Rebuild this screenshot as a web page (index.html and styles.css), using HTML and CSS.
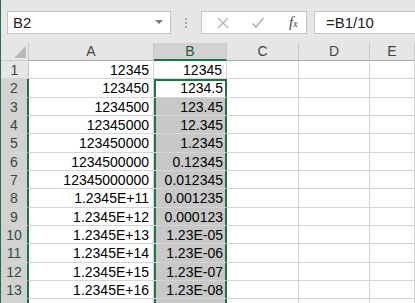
FILE: index.html
```html
<!DOCTYPE html>
<html lang="ja">
<head>
  <meta charset="UTF-8">
  <title>Sheet</title>
  <link rel="stylesheet" href="styles.css">
</head>
<body>
  <div class="window">
    <div class="toolbar">
      <div class="namebox">
        <span>B2</span>
        <svg class="drop" width="8" height="5" viewBox="0 0 8 5"><path d="M0 0h8L4 4z" fill="#7a7a7a"/></svg>
      </div>
      <div class="grip"><i></i><i></i><i></i></div>
      <div class="fnbox">
        <svg width="14" height="14" viewBox="0 0 14 14"><path d="M2 2l10 10M12 2L2 12" stroke="#b4b4b4" stroke-width="1.4" fill="none"/></svg>
        <svg width="14" height="14" viewBox="0 0 14 14"><path d="M1.5 7.5l3.5 3.5 7.5-9" stroke="#b4b4b4" stroke-width="1.6" fill="none"/></svg>
        <span class="fx">f<sub>x</sub></span>
      </div>
      <div class="formula">=B1/10</div>
    </div>

    <div class="sheet">
      <div class="corner"><svg width="12" height="12" viewBox="0 0 12 12"><path d="M12 0v12H0z" fill="#b9b9b9"/></svg></div>
      <div class="colhead">A</div>
      <div class="colhead on">B</div>
      <div class="colhead">C</div>
      <div class="colhead">D</div>
      <div class="colhead">E</div>

      <div class="rowhead">1</div><div class="cell">12345</div><div class="cell">12345</div><div class="cell"></div><div class="cell"></div><div class="cell"></div>
      <div class="rowhead on">2</div><div class="cell">123450</div><div class="cell sel top">1234.5</div><div class="cell"></div><div class="cell"></div><div class="cell"></div>
      <div class="rowhead on">3</div><div class="cell">1234500</div><div class="cell sel fill">123.45</div><div class="cell"></div><div class="cell"></div><div class="cell"></div>
      <div class="rowhead on">4</div><div class="cell">12345000</div><div class="cell sel fill">12.345</div><div class="cell"></div><div class="cell"></div><div class="cell"></div>
      <div class="rowhead on">5</div><div class="cell">123450000</div><div class="cell sel fill">1.2345</div><div class="cell"></div><div class="cell"></div><div class="cell"></div>
      <div class="rowhead on">6</div><div class="cell">1234500000</div><div class="cell sel fill">0.12345</div><div class="cell"></div><div class="cell"></div><div class="cell"></div>
      <div class="rowhead on">7</div><div class="cell">12345000000</div><div class="cell sel fill">0.012345</div><div class="cell"></div><div class="cell"></div><div class="cell"></div>
      <div class="rowhead on">8</div><div class="cell">1.2345E+11</div><div class="cell sel fill">0.001235</div><div class="cell"></div><div class="cell"></div><div class="cell"></div>
      <div class="rowhead on">9</div><div class="cell">1.2345E+12</div><div class="cell sel fill">0.000123</div><div class="cell"></div><div class="cell"></div><div class="cell"></div>
      <div class="rowhead on">10</div><div class="cell">1.2345E+13</div><div class="cell sel fill">1.23E-05</div><div class="cell"></div><div class="cell"></div><div class="cell"></div>
      <div class="rowhead on">11</div><div class="cell">1.2345E+14</div><div class="cell sel fill">1.23E-06</div><div class="cell"></div><div class="cell"></div><div class="cell"></div>
      <div class="rowhead on">12</div><div class="cell">1.2345E+15</div><div class="cell sel fill">1.23E-07</div><div class="cell"></div><div class="cell"></div><div class="cell"></div>
      <div class="rowhead on">13</div><div class="cell">1.2345E+16</div><div class="cell sel fill">1.23E-08</div><div class="cell"></div><div class="cell"></div><div class="cell"></div>
      <div class="rowhead on">14</div><div class="cell">1.2345E+17</div><div class="cell sel fill">1.23E-09</div><div class="cell"></div><div class="cell"></div><div class="cell"></div>
    </div>
  </div>
</body>
</html>
```

FILE: styles.css
```css
body {
  margin: 0;
  font-family: "Liberation Sans", Arial, sans-serif;
  overflow: hidden;
}
.window {
  width: 415px;
  height: 303px;
  border-left: 1px solid #217346;
  box-sizing: border-box;
  background: #e6e6e6;
  overflow: hidden;
}
.toolbar {
  display: flex;
  align-items: center;
  height: 43px;
  padding: 11px 0 9px 6px;
  box-sizing: border-box;
}
.namebox {
  width: 164px;
  height: 23px;
  box-sizing: border-box;
  background: #fff;
  border: 1px solid #c6c6c6;
  display: flex;
  align-items: center;
  justify-content: space-between;
  padding: 0 7px 0 5px;
  font-size: 15px;
  color: #222;
}
.grip {
  width: 30px;
  display: flex;
  flex-direction: column;
  align-items: center;
  gap: 2px;
}
.grip i {
  width: 2px;
  height: 2px;
  background: #a8a8a8;
}
.fnbox {
  width: 106px;
  height: 23px;
  box-sizing: border-box;
  background: #fff;
  border: 1px solid #c6c6c6;
  display: flex;
  align-items: center;
  padding: 0 8px 0 14px;
  gap: 21px;
}
.fx {
  font-family: "Liberation Serif", serif;
  font-style: italic;
  font-size: 15px;
  color: #444;
  margin-left: 3px;
}
.fx sub {
  font-size: 10px;
  vertical-align: 0;
}
.formula {
  flex: 1;
  margin-left: 7px;
  height: 23px;
  box-sizing: border-box;
  background: #fff;
  border: 1px solid #c6c6c6;
  border-right: none;
  padding-left: 11px;
  line-height: 21px;
  font-size: 15px;
  color: #222;
}
.sheet {
  display: grid;
  grid-template-columns: 28px 125px 73px 72px 71px 1fr;
  grid-template-rows: 18px;
  grid-auto-rows: 18.33px;
  background: #fff;
  font-size: 14px;
}
.corner {
  background: #e6e6e6;
  border-right: 1px solid #c6c6c6;
  border-bottom: 1px solid #c6c6c6;
  display: flex;
  align-items: flex-end;
  justify-content: flex-end;
  padding: 0 2px 2px 0;
}
.colhead {
  background: #e6e6e6;
  border-right: 1px solid #c6c6c6;
  border-bottom: 1px solid #a9a9a9;
  text-align: center;
  line-height: 17px;
  color: #444;
}
.colhead.on {
  background: #d2d2d2;
  border-bottom: 2px solid #217346;
  color: #1e5a3a;
}
.rowhead {
  background: #e6e6e6;
  border-right: 1px solid #c6c6c6;
  border-bottom: 1px solid #d4d4d4;
  text-align: center;
  line-height: 18px;
  color: #444;
}
.rowhead.on {
  background: #d2d2d2;
  border-right: 2px solid #217346;
  color: #2e4f3d;
}
.cell {
  border-right: 1px solid #d4d4d4;
  border-bottom: 1px solid #d4d4d4;
  text-align: right;
  padding-right: 4px;
  line-height: 18px;
  color: #000;
  white-space: nowrap;
  overflow: hidden;
}
.cell.sel {
  box-shadow: inset 2px 0 #217346, inset -1px 0 #217346;
  border-right: 1px solid #217346;
  padding-right: 3px;
}
.cell.top {
  box-shadow: inset 2px 0 #217346, inset -1px 0 #217346, inset 0 2px #217346;
}
.cell.fill {
  background: #c8c8c8;
}
```
